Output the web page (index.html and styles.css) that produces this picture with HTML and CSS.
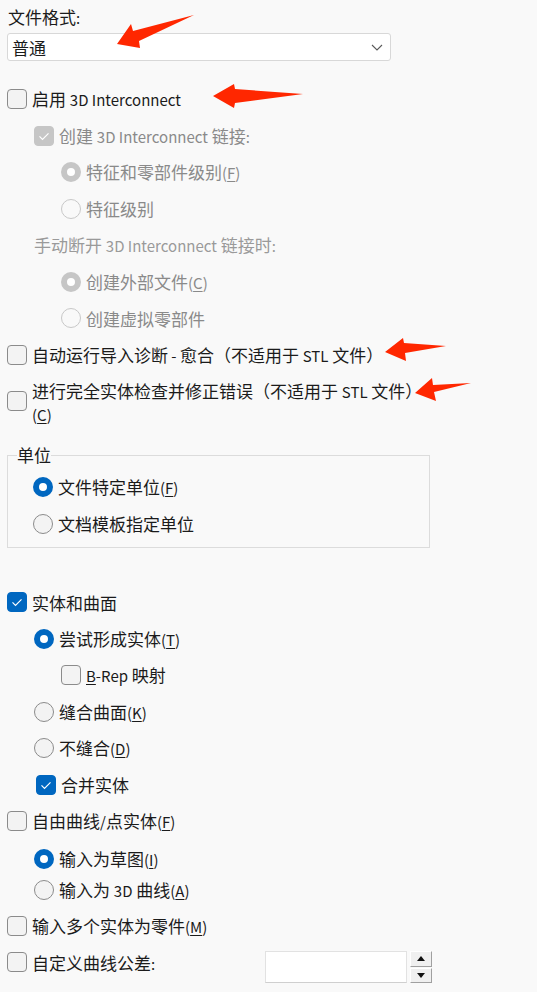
FILE: index.html
```html
<!DOCTYPE html>
<html lang="zh-CN">
<head>
<meta charset="utf-8">
<title>导入选项</title>
<link rel="stylesheet" href="styles.css">
</head>
<body>
<main class="panel">
  <div class="field-label">文件格式<span class="lat">:</span></div>
  <div class="select">
    <span>普通</span>
    <svg class="chev" width="12" height="7" viewBox="0 0 12 7"><path d="M1 1 L6 6 L11 1" fill="none" stroke="#5a5a5a" stroke-width="1.1"/></svg>
  </div>

  <div class="row first"><span class="cb"></span><span>启用 <span class="lat">3D Interconnect</span></span></div>
  <div class="indent disabled">
    <div class="row"><span class="cb on dis"><svg width="20" height="20" viewBox="0 0 20 20"><path d="M5.5 10.3 L8.5 13.3 L14.5 7.3" fill="none" stroke="#fff" stroke-width="1.2"/></svg></span><span>创建 <span class="lat">3D Interconnect</span> 链接<span class="lat">:</span></span></div>
    <div class="indent">
      <div class="row"><span class="rb on dis"></span><span>特征和零部件级别<span class="lat">(<u>F</u>)</span></span></div>
      <div class="row"><span class="rb dis"></span><span>特征级别</span></div>
    </div>
    <div class="row caption"><span>手动断开 <span class="lat">3D Interconnect</span> 链接时<span class="lat">:</span></span></div>
    <div class="indent">
      <div class="row"><span class="rb on dis"></span><span>创建外部文件<span class="lat">(<u>C</u>)</span></span></div>
      <div class="row"><span class="rb dis"></span><span>创建虚拟零部件</span></div>
    </div>
  </div>

  <div class="row"><span class="cb"></span><span>自动运行导入诊断<span class="lat"> - </span>愈合（不适用于 <span class="lat">STL</span> 文件）</span></div>
  <div class="row multi"><span class="cb"></span><span class="wrap"><span class="line">进行完全实体检查并修正错误（不适用于 <span class="lat">STL</span> 文件）</span><span class="line"><span class="lat">(<u>C</u>)</span></span></span></div>

  <fieldset class="group">
    <legend>单位</legend>
    <div class="group-body">
      <div class="row"><span class="rb on"></span><span>文件特定单位<span class="lat">(<u>F</u>)</span></span></div>
      <div class="row"><span class="rb"></span><span>文档模板指定单位</span></div>
    </div>
  </fieldset>

  <div class="row solids"><span class="cb on"><svg width="20" height="20" viewBox="0 0 20 20"><path d="M5.5 10.3 L8.5 13.3 L14.5 7.3" fill="none" stroke="#fff" stroke-width="1.2"/></svg></span><span>实体和曲面</span></div>
  <div class="indent">
    <div class="row"><span class="rb on"></span><span>尝试形成实体<span class="lat">(<u>T</u>)</span></span></div>
    <div class="indent">
      <div class="row"><span class="cb"></span><span><span class="lat"><u>B</u>-Rep</span> 映射</span></div>
    </div>
    <div class="row"><span class="rb"></span><span>缝合曲面<span class="lat">(<u>K</u>)</span></span></div>
    <div class="row"><span class="rb"></span><span>不缝合<span class="lat">(<u>D</u>)</span></span></div>
    <div class="row shift"><span class="cb on"><svg width="20" height="20" viewBox="0 0 20 20"><path d="M5.5 10.3 L8.5 13.3 L14.5 7.3" fill="none" stroke="#fff" stroke-width="1.2"/></svg></span><span>合并实体</span></div>
  </div>

  <div class="row"><span class="cb"></span><span>自由曲线<span class="lat">/</span>点实体<span class="lat">(<u>F</u>)</span></span></div>
  <div class="indent subgroup">
    <div class="row compact"><span class="rb on"></span><span>输入为草图<span class="lat">(<u>I</u>)</span></span></div>
    <div class="row compact"><span class="rb"></span><span>输入为 <span class="lat">3D</span> 曲线<span class="lat">(<u>A</u>)</span></span></div>
  </div>
  <div class="row"><span class="cb"></span><span>输入多个实体为零件<span class="lat">(<u>M</u>)</span></span></div>
  <div class="row tol">
    <span class="cb"></span><span>自定义曲线公差<span class="lat">:</span></span>
    <div class="spin">
      <div class="spin-input"></div>
      <div class="spin-btns">
        <div class="spin-btn"><svg width="8" height="5" viewBox="0 0 8 5"><path d="M0 5 L4 0 L8 5 Z" fill="#111"/></svg></div>
        <div class="spin-btn"><svg width="8" height="5" viewBox="0 0 8 5"><path d="M0 0 L8 0 L4 5 Z" fill="#111"/></svg></div>
      </div>
    </div>
  </div>
</main>

<svg class="annotations" width="537" height="992" viewBox="0 0 537 992">
  <polygon points="117,44 131,24 133,31 194,15 139,41 140,48" fill="#ff2700"/>
  <polygon points="213,96 234,84 235,89 303,94 235,103 234,108" fill="#ff2700"/>
  <polygon points="385,352 403,338 404,343 446,346 405,353 406,361" fill="#ff2700"/>
  <polygon points="415,393 432,378 433,385 471,383 434,392 436,401" fill="#ff2700"/>
</svg>
</body>
</html>
```

FILE: styles.css
```css
html, body {
  margin: 0;
  padding: 0;
}

body {
  position: relative;
  width: 537px;
  height: 992px;
  overflow: hidden;
  background: #f9f9f9;
  color: #1b1b1b;
  font-family: "Noto Sans CJK SC", "Noto Sans", sans-serif;
  font-size: 17px;
}

.lat {
  font-size: 15px;
}

.panel {
  padding-left: 7px;
}

.field-label {
  height: 33px;
  line-height: 33px;
  padding-left: 1px;
}

.select {
  width: 384px;
  height: 28px;
  box-sizing: border-box;
  display: flex;
  align-items: center;
  justify-content: space-between;
  padding: 0 7px 0 4px;
  background: #ffffff;
  border: 1px solid #d8d8d8;
  border-radius: 3px;
  line-height: 21px;
}

.row {
  display: flex;
  align-items: center;
  height: 36.5px;
  line-height: 21px;
  white-space: nowrap;
}

.row.first {
  margin-top: 20px;
}

.indent {
  padding-left: 27px;
}

.disabled {
  color: #8a8a8a;
}

.caption {
  color: #9a9a9a;
}

u {
  text-decoration-thickness: 1px;
  text-underline-offset: 2px;
}

.cb {
  flex: none;
  width: 20px;
  height: 20px;
  box-sizing: border-box;
  margin-right: 5px;
  display: flex;
  align-items: center;
  justify-content: center;
  border: 1px solid #8b8b8b;
  border-radius: 4px;
  background: #f3f3f3;
}

.cb svg {
  flex: none;
}

.cb.on {
  background: #0067c0;
  border-color: #0067c0;
}

.cb.on.dis {
  background: #c6c6c6;
  border-color: #c6c6c6;
}

.rb {
  flex: none;
  width: 20px;
  height: 20px;
  box-sizing: border-box;
  margin-right: 5px;
  border: 1px solid #8b8b8b;
  border-radius: 50%;
  background: #f3f3f3;
}

.rb.on {
  border: 6px solid #0067c0;
  background: #ffffff;
}

.rb.dis {
  border-color: #c8c8c8;
  background: #f9f9f9;
}

.rb.on.dis {
  border: 6px solid #c6c6c6;
  background: #ffffff;
}

.row.multi {
  height: auto;
  align-items: flex-start;
  margin-top: 7px;
}

.row.multi .cb {
  margin-top: 11px;
}

.wrap {
  display: flex;
  flex-direction: column;
}

.wrap .line {
  display: block;
  line-height: 22px;
}

.group {
  width: 423px;
  box-sizing: border-box;
  margin: 19px 0 0 0;
  padding: 4px 0 5px 8px;
  border: 1px solid #dcdcdc;
  min-inline-size: 0;
}

.group legend {
  padding: 0;
  line-height: 20px;
  margin-left: 1px;
}

.group-body {
  padding-left: 17px;
}

.row.solids {
  margin-top: 36px;
}

.row.shift {
  padding-left: 2px;
}

.subgroup {
  padding-top: 4px;
  padding-bottom: 2px;
}

.row.compact {
  height: 31px;
}

.row.tol {
  width: 425px;
  align-items: flex-start;
}

.row.tol > span {
  margin-top: 7.75px;
}

.row.tol > .cb {
  margin-top: 8.25px;
}

.spin {
  margin-left: auto;
  margin-top: 7px;
  display: flex;
  gap: 3px;
}

.spin-input {
  width: 142px;
  height: 32px;
  box-sizing: border-box;
  background: #ffffff;
  border: 1px solid #e2e2e2;
  border-bottom-color: #cfcfcf;
}

.spin-btns {
  display: flex;
  flex-direction: column;
  gap: 1px;
}

.spin-btn {
  width: 22px;
  height: 15.5px;
  box-sizing: border-box;
  display: flex;
  align-items: center;
  justify-content: center;
  background: #f0f0f0;
  border: 1px solid #ffffff;
  border-right-color: #a0a0a0;
  border-bottom-color: #a0a0a0;
}

.annotations {
  position: absolute;
  top: 0;
  left: 0;
  pointer-events: none;
}
```
